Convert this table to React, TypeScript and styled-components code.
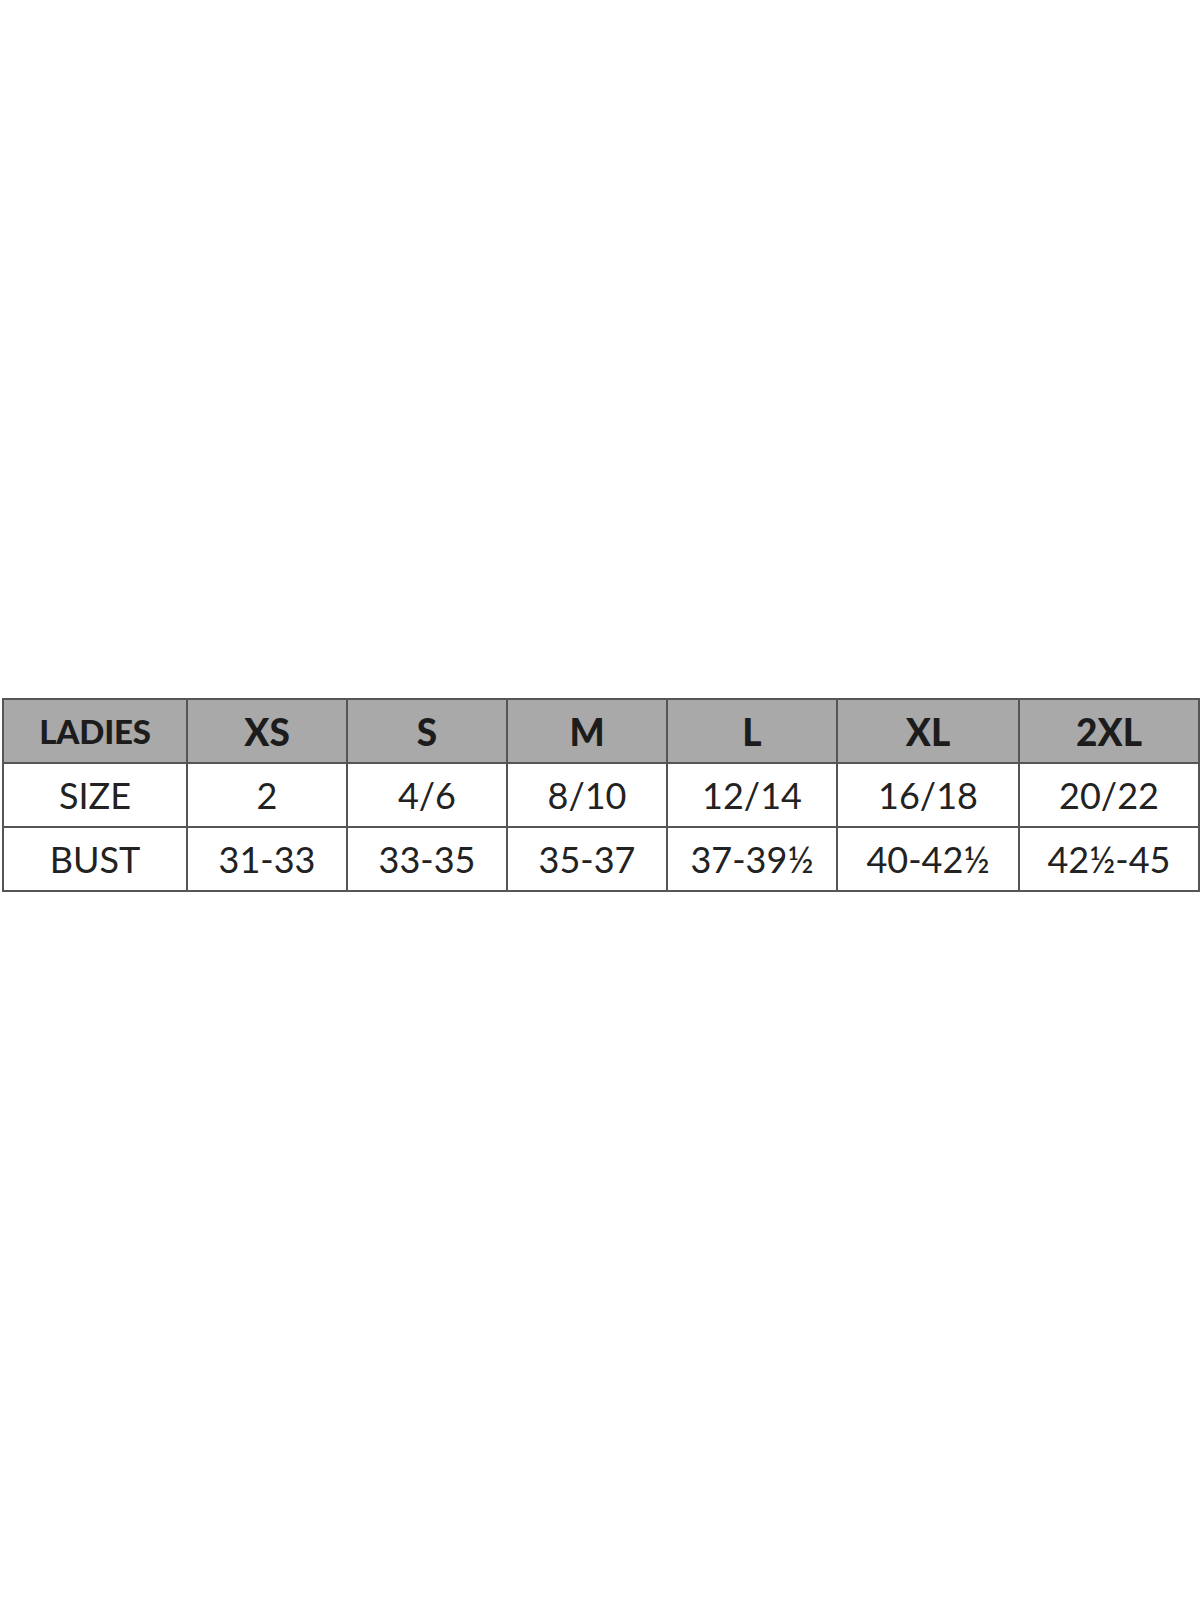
import React from 'react'
import styled, { createGlobalStyle } from 'styled-components'

const GlobalStyle = createGlobalStyle`
  html, body {
    margin: 0;
    padding: 0;
    background: #fff;
  }
  body {
    font-family: Lato, "Open Sans", sans-serif;
  }
`

const Page = styled.div`
  width: 1200px;
  height: 1600px;
  padding-top: 698px;
  padding-left: 2px;
  box-sizing: border-box;
`

const Table = styled.table`
  border-collapse: collapse;
  table-layout: fixed;
  width: 1196px;
  border: 2px solid #7a7a7a;
`

const Cell = styled.td<{ $head?: boolean; $small?: boolean }>`
  height: 62px;
  padding: 0;
  border: 2px solid #555;
  text-align: center;
  vertical-align: middle;
  background: ${p => (p.$head ? '#a9a9a9' : '#fff')};
  color: ${p => (p.$head ? '#1c1c1c' : '#222')};
  font-weight: ${p => (p.$head ? 900 : 400)};
  font-size: ${p => (p.$small ? '33px' : p.$head ? '37px' : '36px')};
  letter-spacing: ${p => (p.$small ? '-0.2px' : '0')};
  line-height: 1;
`

const widths = [184, 160, 160, 160, 170, 182, 180]

const rows = [
  ['LADIES', 'XS', 'S', 'M', 'L', 'XL', '2XL'],
  ['SIZE', '2', '4/6', '8/10', '12/14', '16/18', '20/22'],
  ['BUST', '31-33', '33-35', '35-37', '37-39½', '40-42½', '42½-45'],
]

export default function App() {
  return (
    <>
      <GlobalStyle />
      <Page>
        <Table>
          <colgroup>
            {widths.map((w, i) => (
              <col key={i} style={{ width: w }} />
            ))}
          </colgroup>
          <tbody>
            {rows.map((row, r) => (
              <tr key={r}>
                {row.map((text, c) => (
                  <Cell key={c} $head={r === 0} $small={r === 0 && c === 0}>
                    {text}
                  </Cell>
                ))}
              </tr>
            ))}
          </tbody>
        </Table>
      </Page>
    </>
  )
}
